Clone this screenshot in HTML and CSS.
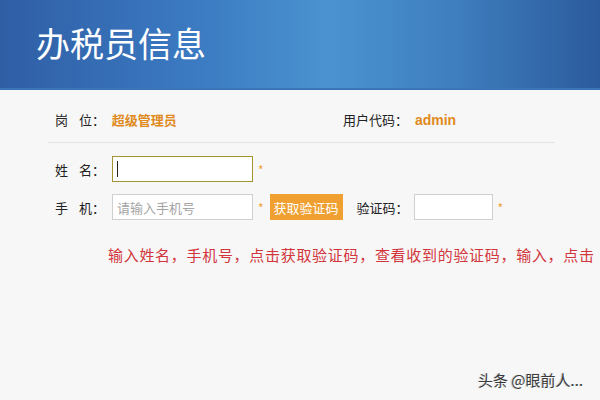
FILE: index.html
```html
<!DOCTYPE html>
<html lang="zh-CN">
  <head>
    <meta charset="UTF-8" />
    <title>办税员信息</title>
    <link rel="stylesheet" href="styles.css">
  </head>
  <body>
    <div class="header">办税员信息</div>

    <div class="info">
      <div class="info-item first">
        <span class="label">岗 位：</span>
        <span class="value">超级管理员</span>
      </div>
      <div class="info-item">
        <span class="label">用户代码：</span>
        <span class="value code">admin</span>
      </div>
    </div>

    <form class="form">
      <div class="row">
        <label class="label field-label">姓 名：</label>
        <div class="input focused"><span class="caret"></span></div>
        <span class="star">*</span>
      </div>
      <div class="row">
        <label class="label field-label">手 机：</label>
        <div class="input placeholder">请输入手机号</div>
        <span class="star">*</span>
        <button type="button" class="btn-code">获取验证码</button>
        <label class="label code-label">验证码：</label>
        <div class="input small"></div>
        <span class="star">*</span>
      </div>
    </form>

    <p class="tip">输入姓名，手机号，点击获取验证码，查看收到的验证码，输入，点击</p>

    <div class="watermark">头条 @眼前人...</div>
  </body>
</html>
```

FILE: styles.css
```css
html, body {
  margin: 0;
  padding: 0;
}
body {
  width: 600px;
  height: 400px;
  overflow: hidden;
  position: relative;
  background: #f7f7f7;
  font-family: "Noto Sans CJK SC", "Liberation Sans", sans-serif;
  font-size: 13px;
  color: #222;
}
.header {
  height: 90px;
  box-sizing: border-box;
  padding: 0 0 4px 36px;
  display: flex;
  align-items: center;
  font-size: 34px;
  color: #fff;
  background: linear-gradient(90deg, #2f5ea5 0%, #3a78c0 30%, #4a93d0 55%, #3f7fc0 75%, #2b5b9c 100%);
  border-bottom: 2px solid #3a74b8;
}
.info {
  margin-left: 48px;
  width: 507px;
  height: 53px;
  box-sizing: border-box;
  padding: 6px 0 0 7px;
  display: flex;
  align-items: center;
  border-bottom: 1px solid #e4e4e4;
}
.info-item.first {
  width: 288px;
}
.label {
  word-spacing: 8px;
}
.value {
  color: #e08a1e;
  font-weight: bold;
  margin-left: 4px;
}
.value.code {
  font-family: "Liberation Sans", sans-serif;
  font-size: 14px;
  margin-left: 4px;
}
.form {
  padding: 13px 0 0 55px;
  display: flex;
  flex-direction: column;
  gap: 12px;
}
.row {
  display: flex;
  align-items: center;
  height: 26px;
}
.field-label {
  width: 57px;
}
.input {
  width: 141px;
  height: 26px;
  box-sizing: border-box;
  border: 1px solid #cfcfcf;
  background: #fff;
  display: flex;
  align-items: center;
  padding-left: 4px;
}
.input.focused {
  border-color: #a29431;
}
.input.small {
  width: 79px;
}
.caret {
  width: 1px;
  height: 16px;
  background: #222;
}
.placeholder {
  color: #a5a5a5;
}
.star {
  color: #f0a030;
  margin-left: 5px;
  font-size: 12px;
}
.btn-code {
  margin-left: 6px;
  width: 73px;
  height: 26px;
  border: none;
  padding: 0;
  background: #f0a030;
  color: #fff;
  font-family: inherit;
  font-size: 13px;
}
.code-label {
  margin-left: 14px;
  width: 57px;
}
.tip {
  margin: 24px 0 0;
  padding-left: 108px;
  white-space: nowrap;
  color: #d2363c;
  font-size: 15px;
  letter-spacing: 0.7px;
}
.watermark {
  position: absolute;
  left: 478px;
  top: 369px;
  font-size: 15px;
  color: #3a3a3a;
  text-shadow: 1px 1px 0 #fff, -1px 0 1px #bbb;
}
```
